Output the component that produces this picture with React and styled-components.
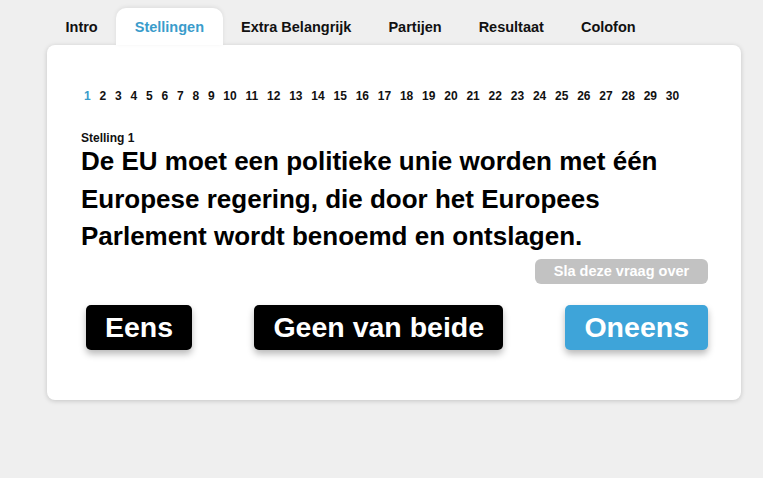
import React from "react";
import styled, { createGlobalStyle } from "styled-components";

const Global = createGlobalStyle`
  html, body { margin: 0; padding: 0; background: #efefef; }
  body { font-family: "Liberation Sans", Arial, sans-serif; }
`;

const Page = styled.div`
  width: 763px;
  height: 478px;
  box-sizing: border-box;
  padding: 8px 0 0 47px;
`;

const Tabs = styled.nav`
  display: flex;
  width: 694px;
  height: 37px;
`;

const Tab = styled.div`
  padding: 0 18.5px;
  height: 37px;
  line-height: 38px;
  font-size: 14.5px;
  font-weight: bold;
  color: ${(p) => (p.$active ? "#3a9ccb" : "#111")};
  background: ${(p) => (p.$active ? "#fff" : "transparent")};
  border-radius: 10px 10px 0 0;
  box-shadow: ${(p) => (p.$active ? "0 -1px 4px rgba(0,0,0,0.08)" : "none")};
  position: relative;
  z-index: 1;
`;

const Card = styled.main`
  width: 694px;
  height: 355px;
  box-sizing: border-box;
  background: #fff;
  border-radius: 8px;
  box-shadow: 0 1px 5px rgba(0, 0, 0, 0.18);
  padding: 44px 33px 0 34px;
  display: flex;
  flex-direction: column;
`;

const Numbers = styled.div`
  display: flex;
  gap: 8.8px;
  padding-left: 3px;
  font-size: 12px;
  font-weight: bold;
  line-height: 14px;
`;

const Num = styled.span`
  color: ${(p) => (p.$active ? "#3a9ccb" : "#111")};
`;

const Label = styled.div`
  margin-top: 28px;
  font-size: 12px;
  font-weight: bold;
  line-height: 14px;
  color: #111;
`;

const Question = styled.h1`
  margin: -2px 0 0;
  font-size: 26px;
  font-weight: bold;
  line-height: 37.5px;
  color: #000;
`;

const SkipRow = styled.div`
  display: flex;
  justify-content: flex-end;
  margin-top: 3px;
`;

const Skip = styled.button`
  width: 173px;
  height: 25px;
  border: none;
  border-radius: 6px;
  background: #c2c2c2;
  color: #fff;
  font-family: inherit;
  font-size: 14.5px;
  font-weight: bold;
  padding: 0;
`;

const Answers = styled.div`
  display: flex;
  justify-content: space-between;
  padding-left: 5px;
  margin-top: 21px;
`;

const Answer = styled.button`
  height: 45px;
  border: none;
  border-radius: 5px;
  padding: 0 19px;
  background: ${(p) => (p.$blue ? "#3ea4d9" : "#000")};
  color: #fff;
  font-family: inherit;
  font-size: 28.5px;
  font-weight: bold;
  box-shadow: 0 4px 7px rgba(0, 0, 0, 0.28);
`;

const tabs = ["Intro", "Stellingen", "Extra Belangrijk", "Partijen", "Resultaat", "Colofon"];

export default function App() {
  return (
    <>
      <Global />
      <Page>
        <Tabs>
          {tabs.map((t) => (
            <Tab key={t} $active={t === "Stellingen"}>
              {t}
            </Tab>
          ))}
        </Tabs>
        <Card>
          <Numbers>
            {Array.from({ length: 30 }, (_, i) => (
              <Num key={i} $active={i === 0}>
                {i + 1}
              </Num>
            ))}
          </Numbers>
          <Label>Stelling 1</Label>
          <Question>
            De EU moet een politieke unie worden met één Europese regering, die door het Europees
            Parlement wordt benoemd en ontslagen.
          </Question>
          <SkipRow>
            <Skip>Sla deze vraag over</Skip>
          </SkipRow>
          <Answers>
            <Answer>Eens</Answer>
            <Answer>Geen van beide</Answer>
            <Answer $blue>Oneens</Answer>
          </Answers>
        </Card>
      </Page>
    </>
  );
}
